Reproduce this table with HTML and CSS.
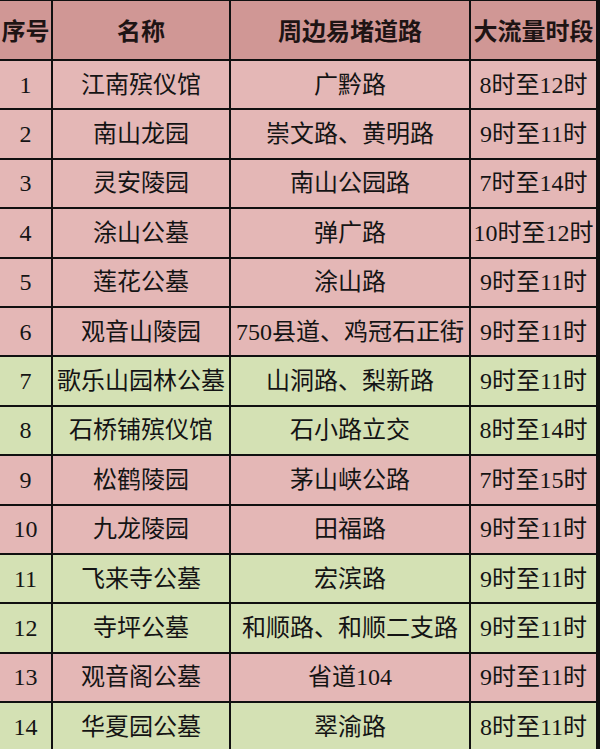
FILE: index.html
```html
<!DOCTYPE html>
<html lang="zh-CN">
<head>
<meta charset="utf-8">
<title>周边易堵道路</title>
<link rel="stylesheet" href="styles.css">
</head>
<body>
<div class="sheet">
  <div class="cell head">序号</div>
  <div class="cell head">名称</div>
  <div class="cell head">周边易堵道路</div>
  <div class="cell head">大流量时段</div>

  <div class="cell pink">1</div><div class="cell pink">江南殡仪馆</div><div class="cell pink">广黔路</div><div class="cell pink">8时至12时</div>
  <div class="cell pink">2</div><div class="cell pink">南山龙园</div><div class="cell pink">崇文路、黄明路</div><div class="cell pink">9时至11时</div>
  <div class="cell pink">3</div><div class="cell pink">灵安陵园</div><div class="cell pink">南山公园路</div><div class="cell pink">7时至14时</div>
  <div class="cell pink">4</div><div class="cell pink">涂山公墓</div><div class="cell pink">弹广路</div><div class="cell pink">10时至12时</div>
  <div class="cell pink">5</div><div class="cell pink">莲花公墓</div><div class="cell pink">涂山路</div><div class="cell pink">9时至11时</div>
  <div class="cell pink">6</div><div class="cell pink">观音山陵园</div><div class="cell pink">750县道、鸡冠石正街</div><div class="cell pink">9时至11时</div>
  <div class="cell green">7</div><div class="cell green">歌乐山园林公墓</div><div class="cell green">山洞路、梨新路</div><div class="cell green">9时至11时</div>
  <div class="cell green">8</div><div class="cell green">石桥铺殡仪馆</div><div class="cell green">石小路立交</div><div class="cell green">8时至14时</div>
  <div class="cell pink">9</div><div class="cell pink">松鹤陵园</div><div class="cell pink">茅山峡公路</div><div class="cell pink">7时至15时</div>
  <div class="cell pink">10</div><div class="cell pink">九龙陵园</div><div class="cell pink">田福路</div><div class="cell pink">9时至11时</div>
  <div class="cell green">11</div><div class="cell green">飞来寺公墓</div><div class="cell green">宏滨路</div><div class="cell green">9时至11时</div>
  <div class="cell green">12</div><div class="cell green">寺坪公墓</div><div class="cell green">和顺路、和顺二支路</div><div class="cell green">9时至11时</div>
  <div class="cell pink">13</div><div class="cell pink">观音阁公墓</div><div class="cell pink">省道104</div><div class="cell pink">9时至11时</div>
  <div class="cell green">14</div><div class="cell green">华夏园公墓</div><div class="cell green">翠渝路</div><div class="cell green">8时至11时</div>
</div>
</body>
</html>
```

FILE: styles.css
```css
html, body {
  margin: 0;
  padding: 0;
  background: #e2b6b5;
  overflow: hidden;
}

.sheet {
  width: 598px;
  display: grid;
  grid-template-columns: 51px 176px 238px 125px;
  grid-template-rows: 58px repeat(14, 47.4px);
  column-gap: 2px;
  row-gap: 2px;
  padding: 1px 2px 0 0;
  background: #101010;
  font-family: "Liberation Serif", "Noto Sans CJK SC", serif;
  font-size: 24px;
  color: #141414;
}

.cell {
  display: flex;
  align-items: center;
  justify-content: center;
  white-space: nowrap;
  overflow: visible;
  line-height: 1;
}

.head {
  background: #d09795;
  font-family: "Noto Sans CJK SC", sans-serif;
  font-weight: 700;
  color: #1e1414;
}

.pink {
  background: #e4b7b6;
}

.green {
  background: #d4e1b4;
}
```
